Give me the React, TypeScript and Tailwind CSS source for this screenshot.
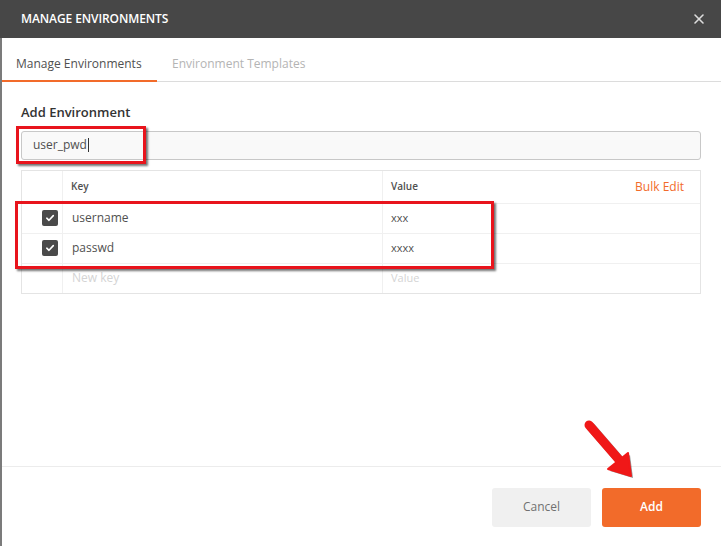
import { X } from 'lucide-react'

const font = { fontFamily: '"Open Sans", "Liberation Sans", sans-serif' }

function Check() {
  return (
    <div className="w-4 h-4 rounded-[2px] bg-[#4a4a4a] flex items-center justify-center">
      <svg width="10" height="10" viewBox="0 0 10 10">
        <path d="M1.8 5.2 L4 7.3 L8.3 2.6" fill="none" stroke="#fff" strokeWidth="1.6" strokeLinecap="round" strokeLinejoin="round" />
      </svg>
    </div>
  )
}

function Row({ k, v, checked, placeholder }: { k: string; v: string; checked?: boolean; placeholder?: boolean }) {
  const tone = placeholder ? 'text-[#d4d4d4]' : 'text-[#505050]'
  return (
    <div className="flex h-[30px] border-t border-[#f0f0f0]">
      <div className="w-[41px] flex items-center justify-end pr-[4px] border-r border-[#f0f0f0]">
        {checked && <Check />}
      </div>
      <div className={`w-[320px] flex items-center pl-[9px] border-r border-[#f0f0f0] text-[12px] ${tone}`}>{k}</div>
      <div className={`flex-1 flex items-center pl-[8px] text-[11px] ${tone}`}>{v}</div>
    </div>
  )
}

export default function App() {
  return (
    <div className="relative w-[721px] h-[546px] overflow-hidden bg-white flex flex-col" style={font}>
      {/* Header */}
      <div className="h-[38px] bg-[#474747] flex items-center justify-between pl-[21px] pr-[14px] shrink-0">
        <span className="text-white text-[12px] font-semibold tracking-[-0.1px]">MANAGE ENVIRONMENTS</span>
        <X size={16} strokeWidth={2.4} className="text-[#dcdcdc]" />
      </div>

      <div className="flex-1 flex flex-col border-l-2 border-[#7b7b7b]">
        {/* Tabs */}
        <div className="h-[44px] flex items-stretch border-b border-[#dcdcdc] shrink-0">
          <div className="w-[155px] flex items-center pl-[14px] pt-[9px] border-b-2 border-[#f26b2a] -mb-px text-[12px] text-[#505050]">
            Manage Environments
          </div>
          <div className="flex items-center pl-[15px] pt-[9px] text-[12px] text-[#b4b4b4]">Environment Templates</div>
        </div>

        {/* Body */}
        <div className="flex-1 flex flex-col pl-[19px] pr-[20px]">
          <div className="mt-[21px] text-[13px] font-semibold text-[#333]">Add Environment</div>
          <div className="mt-[8px] h-[29px] rounded-[3px] border border-[#c8c8c8] bg-[#f9f9f9] flex items-center pl-[11px] text-[12px] text-[#505050]">
            user_pwd<span className="w-px h-[14px] bg-[#333] ml-px" />
          </div>

          {/* Table */}
          <div className="mt-[10px] border border-[#e4e4e4]">
            <div className="flex h-[32px]">
              <div className="w-[41px] border-r border-[#f0f0f0]" />
              <div className="w-[320px] flex items-center pl-[8px] border-r border-[#f0f0f0] text-[10px] font-semibold text-[#505050]">Key</div>
              <div className="flex-1 flex items-center justify-between pl-[8px] pr-[16px]">
                <span className="text-[10px] font-semibold text-[#505050]">Value</span>
                <span className="text-[12px] text-[#f26b2a]">Bulk Edit</span>
              </div>
            </div>
            <Row k="username" v="xxx" checked />
            <Row k="passwd" v="xxxx" checked />
            <Row k="New key" v="Value" placeholder />
          </div>
        </div>

        {/* Footer */}
        <div className="h-[80px] border-t border-[#ececec] flex items-center justify-end gap-[11px] pr-[20px] pt-[1px] shrink-0">
          <button className="w-[99px] h-[39px] rounded-[3px] bg-[#f0f0f0] text-[12px] text-[#707070]">Cancel</button>
          <button className="w-[99px] h-[39px] rounded-[3px] bg-[#f26b2a] text-[12px] font-semibold text-white">Add</button>
        </div>
      </div>

      {/* Annotation overlays */}
      <div className="absolute left-[16px] top-[126px] w-[130px] h-[38px] border-[3px] border-[#e8141c] shadow-[2px_2px_2px_rgba(0,0,0,0.55)]" />
      <div className="absolute left-[15px] top-[201px] w-[479px] h-[68px] border-[3px] border-[#e8141c] shadow-[2px_2px_2px_rgba(0,0,0,0.55)]" />
      <svg className="absolute left-[575px] top-[412px]" width="72" height="74" viewBox="0 0 72 74">
        <g transform="translate(2,2)" opacity="0.4">
          <path d="M14 13 L46 50" stroke="#000" strokeWidth="9" strokeLinecap="round" />
          <path d="M33 57 L56 64 L53 41 Z" fill="#000" />
        </g>
        <path d="M14 13 L46 50" stroke="#f01818" strokeWidth="9" strokeLinecap="round" />
        <path d="M33 57 L56 64 L53 41 Z" fill="#f01818" stroke="#f01818" strokeWidth="2" strokeLinejoin="round" />
      </svg>
    </div>
  )
}
